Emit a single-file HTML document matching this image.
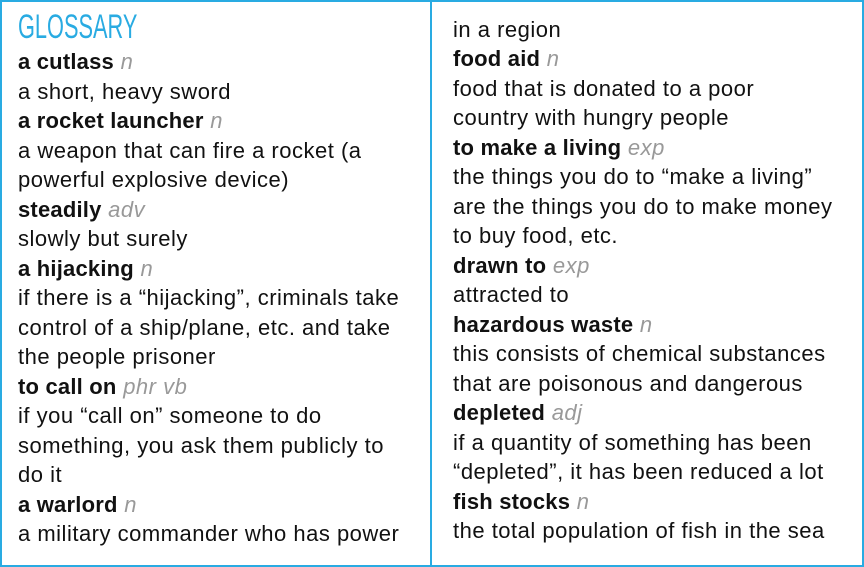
<!DOCTYPE html>
<html><head><meta charset="utf-8"><style>
html,body{margin:0;padding:0;background:#fff;}
body{width:864px;height:567px;position:relative;overflow:hidden;font-family:"Liberation Sans",sans-serif;color:#111;}
.frame{position:absolute;left:0;top:0;width:860px;height:563px;border:2px solid #29abe2;}
.div{position:absolute;left:430px;top:0;width:2px;height:567px;background:#29abe2;}
.col{position:absolute;top:15px;font-size:22px;line-height:29.47px;white-space:nowrap;letter-spacing:0.5px;}
.l{left:18px;}.r{left:453px;}
b{font-weight:bold;letter-spacing:0.2px;}
i{color:#999;font-style:italic;font-weight:normal;}
.g{color:#29abe2;font-size:34px;font-weight:normal;display:inline-block;transform:scaleX(0.64);transform-origin:left center;letter-spacing:0px;position:relative;top:-2px;}
</style></head><body>
<div class="frame"></div><div class="div"></div>
<div class="col l">
<div><span class="g">GLOSSARY</span></div>
<div><b>a cutlass</b> <i>n</i></div>
<div>a short, heavy sword</div>
<div><b>a rocket launcher</b> <i>n</i></div>
<div>a weapon that can fire a rocket (a</div>
<div>powerful explosive device)</div>
<div><b>steadily</b> <i>adv</i></div>
<div>slowly but surely</div>
<div><b>a hijacking</b> <i>n</i></div>
<div>if there is a “hijacking”, criminals take</div>
<div>control of a ship/plane, etc. and take</div>
<div>the people prisoner</div>
<div><b>to call on</b> <i>phr vb</i></div>
<div>if you “call on” someone to do</div>
<div>something, you ask them publicly to</div>
<div>do it</div>
<div><b>a warlord</b> <i>n</i></div>
<div>a military commander who has power</div>
</div>
<div class="col r">
<div>in a region</div>
<div><b>food aid</b> <i>n</i></div>
<div>food that is donated to a poor</div>
<div>country with hungry people</div>
<div><b>to make a living</b> <i>exp</i></div>
<div>the things you do to “make a living”</div>
<div>are the things you do to make money</div>
<div>to buy food, etc.</div>
<div><b>drawn to</b> <i>exp</i></div>
<div>attracted to</div>
<div><b>hazardous waste</b> <i>n</i></div>
<div>this consists of chemical substances</div>
<div>that are poisonous and dangerous</div>
<div><b>depleted</b> <i>adj</i></div>
<div>if a quantity of something has been</div>
<div>“depleted”, it has been reduced a lot</div>
<div><b>fish stocks</b> <i>n</i></div>
<div>the total population of fish in the sea</div>
</div>
</body></html>
